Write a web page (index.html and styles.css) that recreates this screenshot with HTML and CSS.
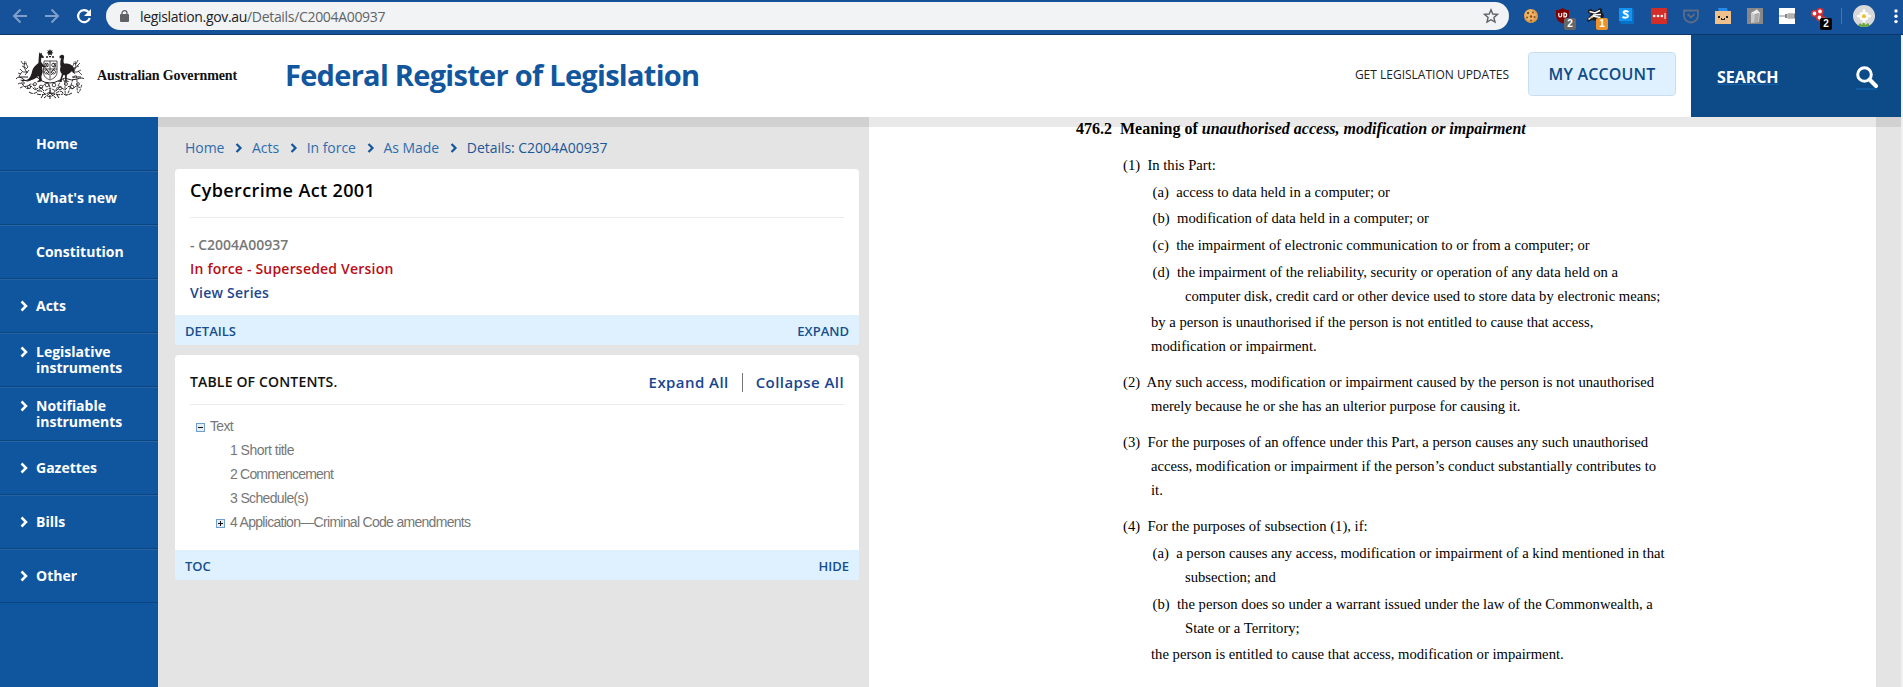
FILE: index.html
```html
<!DOCTYPE html>
<html lang="en">
<head>
<meta charset="utf-8">
<title>Cybercrime Act 2001</title>
<link rel="stylesheet" href="styles.css">
</head>
<body>
<div class="browser">
  <svg class="nav-icons" viewBox="0 0 106 34" fill="none" stroke-width="2">
    <g stroke="#7f9fca"><path d="M27 16H14.500M20.500 9.500L14 16l6.500 6.500"/><path d="M45 16h12.500M51.500 9.500L58 16l-6.500 6.500"/></g>
    <path stroke="#fff" stroke-width="2.200" d="M88.500 12A6 6 0 1 0 89.800 18"/><path fill="#fff" d="M91 9v7h-7z"/>
  </svg>
  <div class="omnibox">
    <svg class="lock" viewBox="0 0 9 12"><rect y="4" width="9" height="8" rx="1" fill="#5f6368"/><path d="M2 5V3.200a2.500 2.500 0 0 1 5 0V5" fill="none" stroke="#5f6368" stroke-width="1.300"/></svg>
    <span class="url">legislation.gov.au<i>/Details/C2004A00937</i></span>
    <svg class="star" viewBox="0 0 16 16" fill="none" stroke="#5f6368" stroke-width="1.400"><path d="M8 1.800l1.800 4.200 4.700.4-3.600 3.100 1.100 4.600L8 11.700l-4 2.400 1.100-4.600L1.500 6.400l4.700-.4z"/></svg>
  </div>
  <div class="extensions">
    <svg viewBox="0 0 24 24"><circle cx="8" cy="8" r="7" fill="#dd9a48"/><circle cx="7" cy="7" r="5.500" fill="#eeb466"/><g fill="#8a4d1c"><circle cx="5" cy="5" r="1.200"/><circle cx="10" cy="4.500" r="1"/><circle cx="8" cy="8.500" r="1.200"/><circle cx="4" cy="9.500" r="1"/><circle cx="11.500" cy="9" r="1"/><circle cx="8" cy="12.500" r="1"/></g></svg>
    <span class="ext"><svg viewBox="0 0 24 24"><path d="M7.500 0c2 1.500 3.500 2 6.500 2v5c0 4-2.500 7-6.500 8.500C3.500 14 1 11 1 7V2c3 0 4.500-.5 6.500-2z" fill="#800000"/><path d="M3.800 5v2.500q0 1.500 1.400 1.500t1.400-1.500V5M9 5v4h.6q2 0 2-2T9.600 5z" fill="none" stroke="#fff" stroke-width="1.200"/></svg><b class="badge gray">2</b></span>
    <span class="ext"><svg viewBox="0 0 24 24"><path d="M0 12l4-6-3-1V2l3-1 3 2 3-1 3-2 2 1v3l2 3-1 4-5 2-6-1-4 2z" fill="#1c1c1c"/><path d="M1.500 11.500L5.500 8l8 1.500M2.500 3.500L8 5l5-2.500M6 7l8-.5" stroke="#fff" stroke-width="1.500" fill="none"/><path d="M3 10l3-1" stroke="#d9b58a" stroke-width="1.500"/></svg><b class="badge orange">1</b></span>
    <svg viewBox="0 0 24 24"><path d="M13 0l2 2v14H2l-2-3z" fill="#0571c4"/><rect width="13" height="13" fill="#1294f6"/><path d="M9.500 4Q6.500 2.300 4.800 3.700c-1.300 2 4.500 2.300 4.200 4.500C8.700 10 5.500 10 3.500 8.800" fill="none" stroke="#fff" stroke-width="2"/></svg>
    <svg viewBox="0 0 24 24"><rect width="16" height="16" rx="1" fill="#d32d27"/><g fill="#fff"><circle cx="3.200" cy="8" r="1.300"/><circle cx="7" cy="8" r="1.300"/><circle cx="10.800" cy="8" r="1.300"/><rect x="13.500" y="5" width="1" height="6"/></g></svg>
    <svg viewBox="0 0 24 24"><path d="M1 2.500h14v5a7 7 0 0 1-14 0z" fill="none" stroke="#5c6c84" stroke-width="1.800"/><path d="M4.500 6L8 9.500 11.500 6" fill="none" stroke="#5c6c84" stroke-width="1.800"/></svg>
    <svg viewBox="0 0 24 24"><path d="M3 0h9l1 4H4z" fill="#258bea"/><rect y="3" width="16" height="13" fill="#edc08c"/><path d="M3 8h2v2H3zM11 8h2v2h-2zM6 10h1v1h2v-1h1v2H6z" fill="#222"/></svg>
    <svg viewBox="0 0 24 24"><rect width="16" height="16" fill="#888"/><path d="M4 5l6-4 3 4-1 9-8 1z" fill="#c9c9c9"/><path d="M4 5l4 1 5-1-3-3z" fill="#eee"/><path d="M8 6l-1 9 4-1 1-9z" fill="#aaa"/></svg>
    <svg viewBox="0 0 24 24"><rect width="16" height="16" fill="#fff"/><path d="M0 7.500h7M0 8.500h6" stroke="#aaa" stroke-width=".7"/><path d="M6 6h2v4H6zM8.500 5.500H16v5H8.500z" fill="#888"/><path d="M9 7h6M9 9h6" stroke="#ddd"/></svg>
    <span class="ext"><svg viewBox="0 0 24 24"><g stroke="#d22f35" stroke-width="1.800" fill="#fff"><circle cx="3.500" cy="5.500" r="2.800"/><circle cx="9" cy="3.500" r="2.800"/><circle cx="8.500" cy="9.500" r="2.800"/><circle cx="13" cy="11.500" r="2"/></g></svg><b class="badge black">2</b></span>
  </div>
  <span class="ext-divider"></span>
  <svg class="avatar" viewBox="0 0 22 22"><clipPath id="round"><circle cx="11" cy="11" r="11"/></clipPath><g clip-path="url(#round)"><rect width="22" height="22" fill="#d8d8d8"/><path d="M4 22l3-4 2 2 2-5 1 5 3-2 3 4z" fill="#6aa63c"/><g fill="#fff"><ellipse cx="11" cy="7.500" rx="1.500" ry="3.500"/><ellipse cx="11" cy="14.500" rx="1.500" ry="3.500"/><ellipse cx="7.500" cy="11" rx="3.500" ry="1.500"/><ellipse cx="14.700" cy="11" rx="3.500" ry="1.500"/><circle cx="8.500" cy="8.500" r="1.600"/><circle cx="13.500" cy="8.500" r="1.600"/><circle cx="8.500" cy="13.500" r="1.600"/><circle cx="13.500" cy="13.500" r="1.600"/></g><circle cx="11" cy="11.200" r="2" fill="#f0c02c"/></g></svg>
  <svg class="dots" viewBox="0 0 4 16" fill="#fff"><circle cx="2" cy="3" r="1.700"/><circle cx="2" cy="8.300" r="1.700"/><circle cx="2" cy="13.600" r="1.700"/></svg>
</div>

<div class="page">
<header class="header">
  <svg class="arms" viewBox="0 0 70 51" fill="none" stroke="#231f20">
    <path fill="#231f20" stroke="none" d="M35 0l.8 1.800 1.900-.5-.8 1.700 1.600 1-1.800.6.200 1.900L35 5.400l-1.900 1.100.2-1.900-1.800-.6 1.600-1-.8-1.700 1.900.5z"/>
    <path d="M31 8h2M34 7.700h2M37 8h2" stroke-width="1.300"/>
    <path fill="#231f20" stroke="none" d="M24 5l.8-2 .8 1.700 1-1.200.4 2.300 2 2.200-.5 1-2.200-.2-.3 4 2.600 3.500 1.500 1-.5 1.200-2.600-.8.800 5-1.500 5 .8 4-1.200.8-3.500.8v-1.200l2-1-1-4-4 3-4.500 1.300-6 .6c-1.500.2-3-.3-4-1.200l6 .1c3-.2 5-3.500 6-8 .8-4 3-6.500 6.500-9z"/>
    <path fill="#231f20" stroke="none" d="M44.500 7l2.300-1.200c1.600-.2 2.600.8 2.300 2.600-.7 3-1 5 .5 6.400 3-.6 6 0 8.500 3 1.500 2 1.600 4 .8 6.500l-2-2-3 2.500-2 1-.3 5.500 3 1.400h-6.200l1.800-1.200-.2-5.200-1.600-.4-2 5.600 1 1.200h-4.700l2.300-1.500 1.900-6.200c-2.200-2-2.200-4.800-1.300-7.200-.7-3-.3-6 .7-8.700l-1.600.3z"/>
    <path stroke-width=".8" d="M29 12h13v11c0 4-3 6.500-7 8-4-1.500-6.500-4-6.500-8zM35 12v18M28 20h14M30 14l3 4M38 14l3 3M33 14l-3 4M41 14l-3 4M31 23l3 3M39 23l-3 3M29 17l5 7M41 17l-5 7"/>
    <g stroke-width=".8"><circle cx="31.500" cy="23" r="2"/><circle cx="38.500" cy="23" r="2"/><circle cx="31.500" cy="16" r="1.800"/><circle cx="38.500" cy="16" r="1.800"/></g>
    <path stroke-width=".8" d="M6 12l2 3 4-1M7 17l4 2M10 12l-1 6 3 6M5 20l3 3 5 0M14 21l-4 5M7 23l-3 4M3 24l3 1M11 15l2 3-2 2M63 11l-2 4-3-1M64 17l-5 2M60 12l1 6-3 6M66 21l-4 2-4 0M57 20l3 5M63 22l4 4M59 15l-2 3 3 2M65 14l-3 3"/>
    <path stroke-width="1" d="M1 30q3-4 7 0t9 0 8 1q5 3 10 3t10-3 8-1 9 0 7 0M4 28h9M57 28h9"/>
    <path stroke-width=".9" stroke-dasharray="3 1" d="M3 35q3-2 5 1t6 0 6 3 8-2 7 3 8-3 7 2 6-3 6-1 5 0M5 39l4-2 3 3 4-3 4 4 5-3 4 4 6-3 6 3 4-4 5 3 4-4 4 3 3-3 5 2"/>
    <g stroke-width=".8"><circle cx="8" cy="34" r="1.300"/><circle cx="14" cy="38" r="1.700"/><circle cx="20" cy="35" r="1.500"/><circle cx="26" cy="38" r="1.800"/><circle cx="32" cy="36" r="1.800"/><circle cx="39" cy="36" r="1.800"/><circle cx="45" cy="39" r="1.800"/><circle cx="51" cy="35" r="1.500"/><circle cx="57" cy="38" r="1.800"/><circle cx="63" cy="35" r="1.400"/></g>
    <path stroke-width="1" stroke-dasharray="4 1" d="M14 43q4 3 8 0t8 2 10 0 8-1 9 0M22 45q6 2 13-2 7 4 13 2M35 41v9M35 44l-6 5M35 44l6 5M28 46l-2 3M42 46l2 3"/>
  </svg>
  <span class="gov">Australian Government</span>
  <h1 class="site-title">Federal Register of Legislation</h1>
  <a class="updates">GET LEGISLATION UPDATES</a>
  <a class="account">MY ACCOUNT</a>
  <div class="search"><span>SEARCH</span>
    <svg viewBox="0 0 22 24" fill="none" stroke="#fff"><path d="M0 23h21" stroke="#1560a8" stroke-width="1.500"/><circle cx="8.500" cy="8.500" r="6.800" stroke-width="3"/><path d="M13.500 13.500l6.500 6.500" stroke-width="4" stroke-linecap="round"/></svg></div>
</header>

<div class="body">
  <nav class="sidebar">
    <a>Home</a>
    <a>What's new</a>
    <a>Constitution</a>
    <a class="sub"><svg class="chev" viewBox="0 0 8 12"><path d="M1.500 1.500L6 6l-4.500 4.500"/></svg>Acts</a>
    <a class="sub two"><svg class="chev" viewBox="0 0 8 12"><path d="M1.500 1.500L6 6l-4.500 4.500"/></svg><span>Legislative<br>instruments</span></a>
    <a class="sub two"><svg class="chev" viewBox="0 0 8 12"><path d="M1.500 1.500L6 6l-4.500 4.500"/></svg><span>Notifiable<br>instruments</span></a>
    <a class="sub"><svg class="chev" viewBox="0 0 8 12"><path d="M1.500 1.500L6 6l-4.500 4.500"/></svg>Gazettes</a>
    <a class="sub"><svg class="chev" viewBox="0 0 8 12"><path d="M1.500 1.500L6 6l-4.500 4.500"/></svg>Bills</a>
    <a class="sub"><svg class="chev" viewBox="0 0 8 12"><path d="M1.500 1.500L6 6l-4.500 4.500"/></svg>Other</a>
  </nav>

  <main class="middle">
    <div class="crumbs">
      <a>Home</a><svg viewBox="0 0 8 12"><path d="M1.500 2L5.500 6l-4 4"/></svg>
      <a>Acts</a><svg viewBox="0 0 8 12"><path d="M1.500 2L5.500 6l-4 4"/></svg>
      <a>In force</a><svg viewBox="0 0 8 12"><path d="M1.500 2L5.500 6l-4 4"/></svg>
      <a>As Made</a><svg viewBox="0 0 8 12"><path d="M1.500 2L5.500 6l-4 4"/></svg>
      <span class="here">Details: C2004A00937</span>
    </div>
    <section class="card">
      <div class="card-body details">
        <h2>Cybercrime Act 2001</h2>
        <p class="ident">- C2004A00937</p>
        <p class="status">In force - Superseded Version</p>
        <p class="series">View Series</p>
      </div>
      <div class="card-foot"><span>DETAILS</span><a>EXPAND</a></div>
    </section>
    <section class="card">
      <div class="card-body toc">
        <div class="toc-head"><h3>TABLE OF CONTENTS.</h3><a>Expand All</a><i></i><a>Collapse All</a></div>
        <ul class="tree">
          <li><svg viewBox="0 0 9 9"><rect class="box" x=".5" y=".5" width="8" height="8"/><path d="M2 4.500h5"/></svg>Text</li>
          <li class="lvl2 short">1 Short title</li>
          <li class="lvl2 commence">2 Commencement</li>
          <li class="lvl2 schedule">3 Schedule(s)</li>
          <li class="lvl2 open"><svg viewBox="0 0 9 9"><rect class="box" x=".5" y=".5" width="8" height="8"/><path d="M2 4.500h5M4.500 2v5"/></svg>4 Application—Criminal Code amendments</li>
        </ul>
      </div>
      <div class="card-foot"><span>TOC</span><a>HIDE</a></div>
    </section>
  </main>

  <article class="doc">
    <h4>476.2&nbsp; Meaning of <em>unauthorised access, modification or impairment</em></h4>
    <p class="l1">(1)&nbsp; In this Part:</p>
    <p class="l2">(a)&nbsp; access to data held in a computer; or</p>
    <p class="l2">(b)&nbsp; modification of data held in a computer; or</p>
    <p class="l2">(c)&nbsp; the impairment of electronic communication to or from a computer; or</p>
    <p class="l2">(d)&nbsp; the impairment of the reliability, security or operation of any data held on a<br>computer disk, credit card or other device used to store data by electronic means;</p>
    <p class="rc">by a person is unauthorised if the person is not entitled to cause that access,<br>modification or impairment.</p>
    <p class="l1">(2)&nbsp; Any such access, modification or impairment caused by the person is not unauthorised<br>merely because he or she has an ulterior purpose for causing it.</p>
    <p class="l1">(3)&nbsp; For the purposes of an offence under this Part, a person causes any such unauthorised<br>access, modification or impairment if the person’s conduct substantially contributes to<br>it.</p>
    <p class="l1">(4)&nbsp; For the purposes of subsection (1), if:</p>
    <p class="l2">(a)&nbsp; a person causes any access, modification or impairment of a kind mentioned in that<br>subsection; and</p>
    <p class="l2">(b)&nbsp; the person does so under a warrant issued under the law of the Commonwealth, a<br>State or a Territory;</p>
    <p class="rc">the person is entitled to cause that access, modification or impairment.</p>
  </article>
</div>
</div>
</body>
</html>
```
FILE: styles.css
```css
* { box-sizing: border-box; }
body { margin: 0; width: 1903px; height: 687px; overflow: hidden; font-family: "Open Sans", "Noto Sans", sans-serif; background: #f1f1f1; }
h1, h2, h3, h4, p, ul { margin: 0; padding: 0; }
a, span, h1, h2, h3 { white-space: nowrap; }
svg { display: block; flex: none; }

/* Browser toolbar */
.browser { display: flex; height: 35px; background: #15529a; border-bottom: 1px solid #0d3768; }
.nav-icons { width: 106px; height: 34px; }
.omnibox { display: flex; align-items: center; width: 1403px; height: 28px; margin-top: 2px; padding-left: 14px; border-radius: 14px; background: #f1f3f4; }
.lock { width: 9px; height: 12px; }
.url { margin-left: 11px; font-size: 14px; letter-spacing: -.32px; color: #202124; }
.url i { font-style: normal; color: #5f6368; }
.star { width: 16px; height: 16px; margin: 0 10px 0 auto; }
.extensions { display: flex; gap: 8px; margin: 8px 0 0 14px; }
.extensions svg { width: 24px; height: 24px; }
.ext { position: relative; }
.badge { position: absolute; left: 9px; top: 10px; width: 12px; height: 12px; border-radius: 2px; font: bold 10px/12px "Liberation Sans", sans-serif; text-align: center; color: #fff; }
.gray { background: #666; }
.orange { background: #ee932b; }
.black { background: #000; }
.ext-divider { width: 1px; height: 16px; margin: 8px 0 0 6px; background: #4577b0; }
.avatar { width: 22px; height: 22px; margin: 5px 0 0 11px; }
.dots { width: 4px; height: 16px; margin: 8px 0 0 19px; }

/* Site header */
.page { width: 1901px; }
.header { display: flex; height: 82px; background: #fff; }
.arms { width: 70px; height: 51px; margin: 14px 0 0 15px; }
.gov { width: 140px; margin: 31px 0 0 12px; font: bold 14px/20px "Liberation Serif", serif; letter-spacing: -.13px; color: #111; }
.site-title { margin: 20px 0 0 48px; font-size: 29px; line-height: 40px; font-weight: 700; letter-spacing: -.72px; color: #12569e; }
.updates { margin: 30px 0 0 auto; font-size: 12px; line-height: 20px; color: #222; }
.account { width: 148px; height: 44px; margin: 17px 15px 0 19px; border: 1px solid #c9dff0; border-radius: 4px; background: #dff1fe; font-size: 16px; line-height: 42px; font-weight: 600; letter-spacing: .17px; text-align: center; color: #0d4b88; }
.search { display: flex; width: 210px; padding-left: 26px; background: #0d4b88; font-size: 16px; line-height: 84px; font-weight: 700; letter-spacing: -.05px; color: #fff; }
.search span { text-decoration: underline 1px #1560a8; text-underline-offset: 1px; }
.search svg { width: 22px; height: 24px; margin: 31px 23px 0 auto; }

/* Left navigation */
.body { display: flex; height: 570px; background: #e4e4e4; box-shadow: inset 0 10px #d1d1d1; }
.sidebar { width: 158px; background: #10569e; }
.sidebar a { display: flex; height: 54px; padding-left: 36px; border-top: 1px solid #2464a6; border-bottom: 1px solid #0c4680; color: #fff; font-size: 14px; line-height: 52px; font-weight: 700; }
.sidebar a:first-child { border-top-color: #10569e; }
.sidebar .sub { padding-left: 20px; }
.sidebar .two { padding-top: 10px; line-height: 16px; }
.chev { width: 8px; height: 12px; margin: 20px 8px 0 0; fill: none; stroke: #fff; stroke-width: 2.5; }
.two .chev { margin-top: 2px; }

/* Breadcrumbs and cards */
.middle { width: 711px; padding: 18px 10px 0 17px; }
.crumbs { display: flex; height: 34px; padding-left: 10px; font-size: 14px; line-height: 26px; letter-spacing: -.04px; color: #2f6cae; }
.crumbs svg { width: 8px; height: 12px; margin: 7px 9px 0 10.6px; fill: none; stroke: #12569e; stroke-width: 2.2; }
.here { color: #1d5796; }
.card { width: 684px; margin-bottom: 10px; border-radius: 4px; background: #fff; overflow: hidden; }
.details { height: 146px; padding: 0 15px; }
.card h2 { height: 49px; margin-bottom: 15px; border-bottom: 1px solid #ebebeb; font-size: 18px; line-height: 42px; font-weight: 600; letter-spacing: .37px; color: #000; }
.card p { font-size: 14px; line-height: 24px; font-weight: 600; }
.ident { color: #777; }
.status { letter-spacing: .2px; color: #b90e14; }
.series { letter-spacing: .26px; color: #1c4790; }
.card-foot { display: flex; justify-content: space-between; height: 30px; padding: 0 10px; background: #dff1fe; font-size: 13px; line-height: 32px; font-weight: 600; color: #164f8c; }
.toc { height: 195px; padding: 0 15px; }
.toc-head { display: flex; height: 50px; border-bottom: 1px solid #ebebeb; line-height: 54px; font-weight: 600; font-size: 15px; letter-spacing: .43px; color: #17468f; }
.toc-head h3 { margin-right: auto; font-size: 14px; font-weight: 600; letter-spacing: .16px; color: #111; }
.toc-head i { width: 1px; height: 19px; margin: 18px 13px 0; background: #777; }
.tree { padding-top: 9px; list-style: none; font: 14px/24px "Liberation Sans", sans-serif; letter-spacing: -.7px; color: #777; }
.tree li { display: flex; height: 24px; padding-left: 6px; white-space: nowrap; }
.tree svg { width: 9px; height: 9px; margin: 9px 5px 0 0; }
.tree .box { fill: #e8ecf1; stroke: #6f9fd0; }
.tree path { stroke: #111; }
.tree .lvl2 { padding-left: 40px; }
.tree .short { letter-spacing: -.53px; }
.tree .commence { letter-spacing: -.8px; }
.tree .schedule { letter-spacing: -.65px; }
.tree .open { padding-left: 26px; }

/* Document text */
.doc { width: 1007px; background: #fff; box-shadow: inset 0 10px #e9e9e9; font: 14.667px/24px "Liberation Serif", serif; color: #000; }
.doc h4 { margin-left: 207px; font-size: 16px; line-height: 24px; font-weight: 700; }
.doc p { margin-top: 2.667px; }
.doc .l1 { margin-top: 12px; padding-left: 282px; text-indent: -28px; }
.doc .l2 { padding-left: 316px; text-indent: -32.4px; }
.doc .rc { padding-left: 282px; }
```
